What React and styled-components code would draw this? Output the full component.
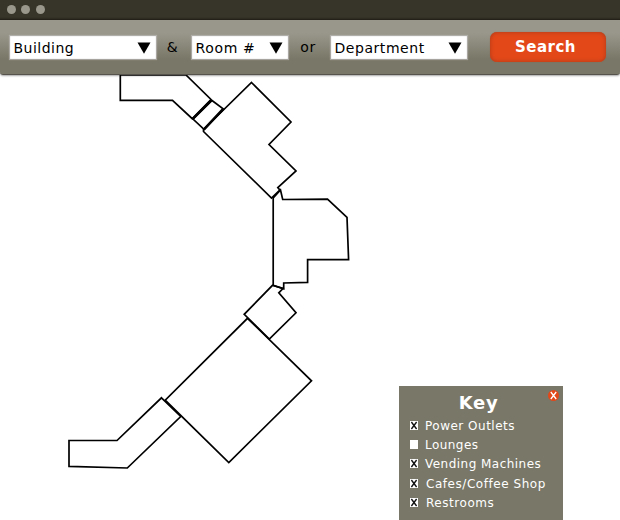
import React, { useState } from 'react';
import styled, { createGlobalStyle } from 'styled-components';

const GlobalStyle = createGlobalStyle`
  * { box-sizing: border-box; }
  body { margin: 0; background: #fff; overflow: hidden; }
  button { font: inherit; border: 0; padding: 0; cursor: pointer; }
`;

const Window = styled.main`
  position: relative;
  width: 620px;
  height: 520px;
  overflow: hidden;
  background: #fff;
  color: #000;
  font-family: "DejaVu Sans", sans-serif;
`;

const TitleBar = styled.header`
  display: flex;
  align-items: center;
  height: 20px;
  padding: 0 0 1px 7px;
  gap: 5.4px;
  background: linear-gradient(#37352a 0 17px, #2b291f 19px, #1d1b14 20px);
`;

const WindowDot = styled.span`
  width: 9px;
  height: 9px;
  border-radius: 50%;
  background: #99978b;
`;

const Toolbar = styled.form`
  display: flex;
  align-items: flex-start;
  height: 55px;
  padding: 16px 0 0 10px;
  border-bottom: 1px solid #55534b;
  border-radius: 0 0 3px 3px;
  background: linear-gradient(#99978b 0 13px, #929083 19px, #797767 39px, #797767);
  box-shadow: 0 1px 2px rgba(0, 0, 0, 0.35);
`;

const Select = styled.button`
  display: flex;
  align-items: center;
  justify-content: space-between;
  width: ${({ $width }) => $width}px;
  height: 23px;
  padding: 1px 5px 0 3.5px;
  background: #fff;
  box-shadow: 0 0 1px 1px rgba(190, 188, 188, 0.65), inset 0 0 1px rgba(60, 60, 60, 0.5);
  color: #000;
  font-size: 14px;
  line-height: 20px;
  letter-spacing: ${({ $spacing }) => $spacing}px;
  white-space: nowrap;
`;

const Arrow = styled.svg`
  flex: none;
  width: 14px;
  height: 12px;
`;

const Joiner = styled.span`
  width: ${({ $width }) => $width}px;
  padding: 1px 3px 0 0;
  text-align: center;
  font-size: 14px;
  line-height: 20px;
  letter-spacing: 0.5px;
`;

const SearchButton = styled.button`
  width: 116px;
  height: 30px;
  margin: -4px 0 0 23px;
  padding: 0 5px 1px 0;
  border-radius: 7px;
  background: #e34819;
  box-shadow: inset 0 0 4px #a93b1b, 0 0 1px #8e6048;
  color: #fff;
  font-size: 15px;
  font-weight: 700;
  line-height: 20px;
  letter-spacing: 0.5px;
`;

const FloorPlan = styled.svg`
  display: block;
  width: 620px;
  height: 445px;
  fill: none;
  stroke: #000;
  stroke-width: 1.7;
`;

const KeyPanel = styled.aside`
  position: absolute;
  left: 399px;
  top: 386px;
  width: 164px;
  height: 134px;
  padding: 6px 0 0 11px;
  background: #797767;
  color: #fff;
`;

const KeyTitle = styled.h2`
  margin: 0 0 3px;
  padding-right: 16px;
  text-align: center;
  font-size: 18px;
  font-weight: 700;
  line-height: 22px;
  letter-spacing: 0.7px;
`;

const CloseButton = styled.button`
  position: absolute;
  top: 4px;
  right: 4px;
  width: 11px;
  height: 11px;
  border-radius: 50%;
  background: #e34819;
  color: #fff;
  svg { display: block; }
`;

const KeyRow = styled.label`
  display: flex;
  align-items: center;
  height: 19px;
  margin-top: ${({ $offset = 0 }) => $offset}px;
  gap: ${({ $gap }) => $gap}px;
  font-size: 12px;
  line-height: 19px;
  letter-spacing: ${({ $spacing }) => $spacing}px;
  white-space: nowrap;
`;

const CheckMark = styled.button`
  flex: none;
  width: 8px;
  height: 9px;
  margin-bottom: 2px;
  background: #fff;
  color: #111;
  svg { display: block; }
`;

const buildings = [
  'M120.3 75H186L211 99.5L192.3 118.7L172.5 100.3H120.3Z',
  'M212 100.5L223.5 109L204 129.3L193 119Z',
  'M251.5 82.5L291 122L269 144.5L296 171L277.8 187.5L279.8 190L271.5 198L203.5 131.5V129.5Z',
  'M273.2 198L280.5 190L282.7 199.5L327.5 199.2L347 217.5L348.6 259.6H307.6V282.3L283.7 283V288.8L273.2 285.3Z',
  'M272.5 285.3L283 288.5L278.8 292.8L296 312.8L269.3 339L244.2 314.3Z',
  'M247.5 318.3L311.5 380.8L228.8 462.5L165.2 400.2Z',
  'M161.5 397.8L180.7 416.5L127.3 468L69 466.3V440.5H117Z',
];

const sharedWalls = 'M211.5 100.2L192.8 118.9M223 109.2L203.8 129.6';

const amenities = [
  { label: 'Power Outlets', checked: true, gap: 7, spacing: 0.5 },
  { label: 'Lounges', checked: false, gap: 7, spacing: 0.45 },
  { label: 'Vending Machines', checked: true, gap: 7, spacing: 0.47 },
  { label: 'Cafes/Coffee Shop', checked: true, gap: 8, spacing: 0.55, offset: 1 },
  { label: 'Restrooms', checked: true, gap: 8, spacing: 0.55 },
];

function Dropdown({ label, width, spacing }) {
  return (
    <Select type="button" $width={width} $spacing={spacing}>
      {label}
      <Arrow viewBox="0 0 14 12"><path d="M0.5 0.5H13.5L7 11.7Z" /></Arrow>
    </Select>
  );
}

function Cross() {
  return (
    <svg width="8" height="9" viewBox="0 0 8 9" fill="none" stroke="currentColor" strokeWidth="1.35">
      <path d="M1.4 1L6.6 8M6.6 1L1.4 8" />
    </svg>
  );
}

export default function App() {
  const [items, setItems] = useState(amenities);
  const [keyOpen, setKeyOpen] = useState(true);
  const toggle = (index) =>
    setItems(items.map((item, i) => (i === index ? { ...item, checked: !item.checked } : item)));

  return (
    <>
      <GlobalStyle />
      <Window>
        <TitleBar><WindowDot /><WindowDot /><WindowDot /></TitleBar>
        <Toolbar onSubmit={(event) => event.preventDefault()}>
          <Dropdown label="Building" width={146} spacing={0.48} />
          <Joiner $width={36}>&amp;</Joiner>
          <Dropdown label="Room #" width={96} spacing={0.65} />
          <Joiner $width={43}>or</Joiner>
          <Dropdown label="Department" width={136} spacing={0.55} />
          <SearchButton>Search</SearchButton>
        </Toolbar>
        <FloorPlan viewBox="0 75 620 445">
          {buildings.map((d) => <path key={d} d={d} />)}
          <path d={sharedWalls} strokeWidth="2.6" />
        </FloorPlan>
        {keyOpen && (
          <KeyPanel>
            <KeyTitle>Key</KeyTitle>
            <CloseButton aria-label="Close" onClick={() => setKeyOpen(false)}>
              <svg width="11" height="11" fill="none" stroke="currentColor" strokeWidth="1.3">
                <path d="M2.8 2L8.2 9M8.2 2L2.8 9" />
              </svg>
            </CloseButton>
            {items.map((item, index) => (
              <KeyRow key={item.label} $gap={item.gap} $spacing={item.spacing} $offset={item.offset}>
                <CheckMark aria-label={item.label} onClick={() => toggle(index)}>
                  {item.checked && <Cross />}
                </CheckMark>
                {item.label}
              </KeyRow>
            ))}
          </KeyPanel>
        )}
      </Window>
    </>
  );
}
